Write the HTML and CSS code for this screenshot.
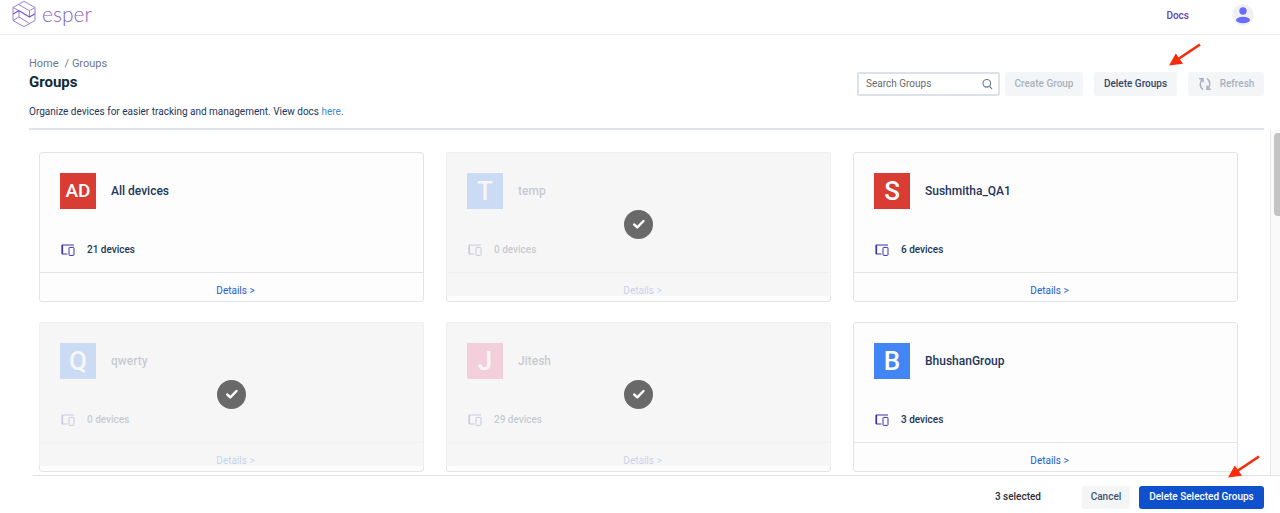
FILE: index.html
```html
<!DOCTYPE html>
<html lang="en">
<head>
<meta charset="utf-8">
<title>Esper – Groups</title>
<link rel="stylesheet" href="styles.css">
</head>
<body>
<svg class="symbols" aria-hidden="true">
  <symbol id="devices" viewBox="0 0 14 12">
    <path d="M13 1H1.5V10H6.5" fill="none" stroke="currentColor" stroke-width="1.2"/>
    <path d="M1.2 1V10" stroke="currentColor" stroke-width="1.5"/>
    <rect x="8" y="3.4" width="5" height="8" rx=".7" fill="none" stroke="currentColor" stroke-width="1"/>
  </symbol>
  <symbol id="arrow" viewBox="0 0 34 26">
    <path d="M32 2.5L11 16.5" stroke="#fb2a08" stroke-width="2.6"/>
    <path d="M1 23.5L7.8 11.5L15 21.8Z" fill="#fb2a08"/>
  </symbol>
</svg>

<header class="topbar">
  <a class="brand" href="#" aria-label="esper">
    <svg class="brand-mark" viewBox="0 0 24 28" fill="none" stroke="#8d74cc" stroke-width=".9" stroke-linejoin="round">
      <path d="M12 1.3L23 7.5V20.5L12 26.7L1 20.5V7.5Z"/>
      <path d="M6.5 4.5L17.5 10.7L23 7.5M17.5 10.7V17M7 10.7V17M1 20.5L7 17L17.500 23.500M1 7.500L7 10.700"/>
      <path d="M1 14L7 10.700L17.500 17L23 13.700" stroke-width="1.300" stroke="#7656c0"/>
    </svg>
    <span class="brand-name">esper</span>
  </a>
  <nav class="topnav">
    <a class="docs" href="#">Docs</a>
    <button class="user" type="button" aria-label="Account">
      <svg viewBox="0 0 22 22"><circle cx="11" cy="11" r="10.7" fill="#f1f1f2"/><circle cx="11" cy="7" r="3.7" fill="#6a6bff"/><ellipse cx="11" cy="16" rx="7" ry="3.3" fill="#6a6bff"/></svg>
    </button>
  </nav>
</header>

<section class="heading">
  <div class="titles">
    <nav class="crumbs"><a href="#">Home</a><span>/ Groups</span></nav>
    <h1>Groups</h1>
    <p>Organize devices for easier tracking and management. View docs <a href="#">here</a>.</p>
  </div>
  <div class="tools">
    <label class="search">
      <input type="text" placeholder="Search Groups" aria-label="Search Groups">
      <svg viewBox="0 0 12 12" fill="none" stroke="#66758f" stroke-width="1.1"><circle cx="5.800" cy="5.300" r="3.800"/><path d="M8.500 8.200L11 11"/></svg>
    </label>
    <button class="btn create" type="button" disabled>Create Group</button>
    <button class="btn delete" type="button">Delete Groups</button>
    <button class="btn refresh" type="button" disabled>
      <svg viewBox="0 0 14 14" fill="none" stroke="#a3adbb" stroke-width="1.4"><path d="M5 12.500Q2.200 10.500 2.200 7Q2.200 4.500 4.600 2M1.200 1.700H5V5.500M9 1.500Q11.800 3.500 11.800 7Q11.800 9.500 9.400 12M12.800 12.300H9V8.500"/></svg>
      Refresh
    </button>
  </div>
</section>

<main class="content">
  <div class="grid">
    <article class="card">
      <div class="info"><span class="avatar red two">AD</span><h2>All devices</h2></div>
      <div class="count"><svg><use href="#devices"/></svg>21 devices</div>
      <a class="details" href="#">Details &gt;</a>
    </article>
    <article class="card">
      <div class="info"><span class="avatar blue">T</span><h2>temp</h2></div>
      <div class="count"><svg><use href="#devices"/></svg>0 devices</div>
      <a class="details" href="#">Details &gt;</a>
      <label class="veil"><input type="checkbox" checked aria-label="Select temp"><svg viewBox="0 0 14 12"><path d="M2.200 6.500L5.300 9.300L11.500 3" /></svg></label>
    </article>
    <article class="card">
      <div class="info"><span class="avatar red">S</span><h2>Sushmitha_QA1</h2></div>
      <div class="count"><svg><use href="#devices"/></svg>6 devices</div>
      <a class="details" href="#">Details &gt;</a>
    </article>
    <article class="card">
      <div class="info"><span class="avatar blue">Q</span><h2>qwerty</h2></div>
      <div class="count"><svg><use href="#devices"/></svg>0 devices</div>
      <a class="details" href="#">Details &gt;</a>
      <label class="veil"><input type="checkbox" checked aria-label="Select qwerty"><svg viewBox="0 0 14 12"><path d="M2.200 6.500L5.300 9.300L11.500 3" /></svg></label>
    </article>
    <article class="card">
      <div class="info"><span class="avatar pink">J</span><h2>Jitesh</h2></div>
      <div class="count"><svg><use href="#devices"/></svg>29 devices</div>
      <a class="details" href="#">Details &gt;</a>
      <label class="veil"><input type="checkbox" checked aria-label="Select Jitesh"><svg viewBox="0 0 14 12"><path d="M2.200 6.500L5.300 9.300L11.500 3" /></svg></label>
    </article>
    <article class="card">
      <div class="info"><span class="avatar blue">B</span><h2>BhushanGroup</h2></div>
      <div class="count"><svg><use href="#devices"/></svg>3 devices</div>
      <a class="details" href="#">Details &gt;</a>
    </article>
  </div>
  <div class="track"><div class="thumb"></div></div>
</main>

<footer class="actions">
  <span class="selected">3 selected</span>
  <button class="btn cancel" type="button">Cancel</button>
  <div class="confirm">
    <button class="btn primary" type="button">Delete Selected Groups</button>
    <svg class="pointer at-confirm" aria-hidden="true"><use href="#arrow"/></svg>
  </div>
</footer>
<svg class="pointer at-delete" aria-hidden="true"><use href="#arrow"/></svg>
</body>
</html>
```
FILE: styles.css
```css
* { box-sizing: border-box; }
body {
  margin: 0;
  height: 100vh;
  display: flex;
  flex-direction: column;
  position: relative;
  overflow: hidden;
  background: #fff;
  color: #22355a;
  font: 10px/16px Roboto, "Liberation Sans", sans-serif;
}
a { text-decoration: none; }
button, input { font: inherit; }
svg { display: block; }
.symbols { position: absolute; width: 0; height: 0; }

.topbar {
  display: flex;
  justify-content: space-between;
  align-items: flex-start;
  height: 35px;
  padding: 0 26px 0 12px;
  border-bottom: 1px solid #ebecee;
}
.brand { display: flex; gap: 6px; align-items: center; height: 28px; color: #8164c4; }
.brand-mark { width: 24px; height: 28px; }
.brand-name { font: 300 21px/24px Lato, sans-serif; }
.topnav { display: flex; align-items: center; gap: 43px; padding-top: 4px; }
.docs { padding-top: 2px; color: #6340b5; font-weight: 500; }
.user { width: 22px; height: 22px; padding: 0; border: 0; background: none; }

.heading {
  display: flex;
  justify-content: space-between;
  margin: 20px 16px 0 29px;
  padding-bottom: 8px;
  border-bottom: 2px solid #dfe3e8;
}
.crumbs { display: flex; gap: 6px; padding-top: 1px; color: #6b7890; font-size: 11px; }
.crumbs a { color: inherit; }
.heading h1 { margin: 0 0 12px; color: #102a3a; font-size: 15px; line-height: 20px; font-weight: 700; }
.heading p { margin: 0; }
.heading p a { color: #3d8ad0; }
.tools { display: flex; align-items: flex-start; padding-top: 17px; }
.search {
  display: flex;
  align-items: center;
  width: 143px;
  height: 24px;
  padding: 0 5px 0 7px;
  border: 2px solid #dbe2ea;
  border-radius: 2px;
}
.search input { flex: 1; min-width: 0; padding: 0; border: 0; outline: 0; background: none; color: #333; }
.search input::placeholder { color: #666a70; opacity: 1; }
.search svg { width: 12px; height: 12px; }
.btn {
  display: flex;
  align-items: center;
  justify-content: center;
  height: 24px;
  padding: 0 8px;
  border: 0;
  border-radius: 3px;
  background: #f4f5f7;
  color: #42526e;
  font-weight: 500;
  white-space: nowrap;
}
.btn:disabled { color: #a8b1c0; }
.create { width: 78px; margin-left: 5px; }
.delete { width: 83px; margin-left: 11px; color: #33466b; }
.refresh { width: 76px; margin-left: 11px; gap: 8px; }
.refresh svg { width: 14px; height: 14px; }

.content { flex: 1; min-height: 0; display: flex; overflow: hidden; }
.grid {
  flex: 1;
  display: grid;
  grid-template-columns: repeat(3, 1fr);
  align-content: start;
  gap: 20px 22px;
  padding: 22px 32px 0 39px;
}
.card {
  position: relative;
  border: 1px solid #e2e5e8;
  border-radius: 3px;
  background: #fdfdfd;
}
.info { display: flex; align-items: center; gap: 15px; padding: 20px 20px 0; }
.info h2 { margin: 0; font-size: 12px; line-height: 16px; font-weight: 500; }
.avatar {
  width: 36px;
  height: 36px;
  color: #fff;
  font: 500 26px/36px Roboto, sans-serif;
  text-align: center;
}
.two { font-size: 19px; }
.red { background: #d93c32; }
.blue { background: #4286f5; }
.pink { background: #f0508a; }
.count { display: flex; align-items: center; gap: 12px; padding: 33px 21px 14px; font-weight: 500; }
.count svg { width: 14px; height: 12px; color: #3a34ad; }
.details { display: block; padding: 10px 0 2px 8px; border-top: 1px solid #e2e5e8; color: #1f5bd0; text-align: center; }
.veil {
  position: absolute;
  inset: -1px -1px 5px;
  display: grid;
  place-items: center;
  background: rgba(243, 243, 243, .78);
}
.veil input, .veil svg { grid-area: 1 / 1; margin: 0; }
.veil input { appearance: none; width: 29px; height: 29px; border-radius: 50%; background: #696969; }
.veil svg { position: relative; width: 14px; height: 12px; fill: none; stroke: #fff; stroke-width: 2.4; stroke-linecap: round; stroke-linejoin: round; pointer-events: none; }
.track { width: 10px; padding: 3px 0 0 3px; border-left: 1px solid #e8e8e8; background: #fafafa; }
.thumb { height: 83px; border-radius: 4px 0 0 4px; background: #c3c3c3; }

.actions {
  display: flex;
  justify-content: flex-end;
  align-items: center;
  height: 38px;
  margin-left: 33px;
  padding: 5px 16px 0 0;
  border-top: 1px solid #e0e3e6;
}
.selected { margin-right: 41px; color: #2b2f3a; font-weight: 500; }
.actions .btn { height: 23px; }
.cancel { width: 48px; margin-right: 9px; }
.confirm { position: relative; }
.actions .primary { width: 125px; background: #0f50cc; color: #fff; }
.pointer { position: absolute; width: 34px; height: 26px; pointer-events: none; }
.at-confirm { right: 3px; bottom: 29px; }
.at-delete { top: 42px; right: 78px; }
```
